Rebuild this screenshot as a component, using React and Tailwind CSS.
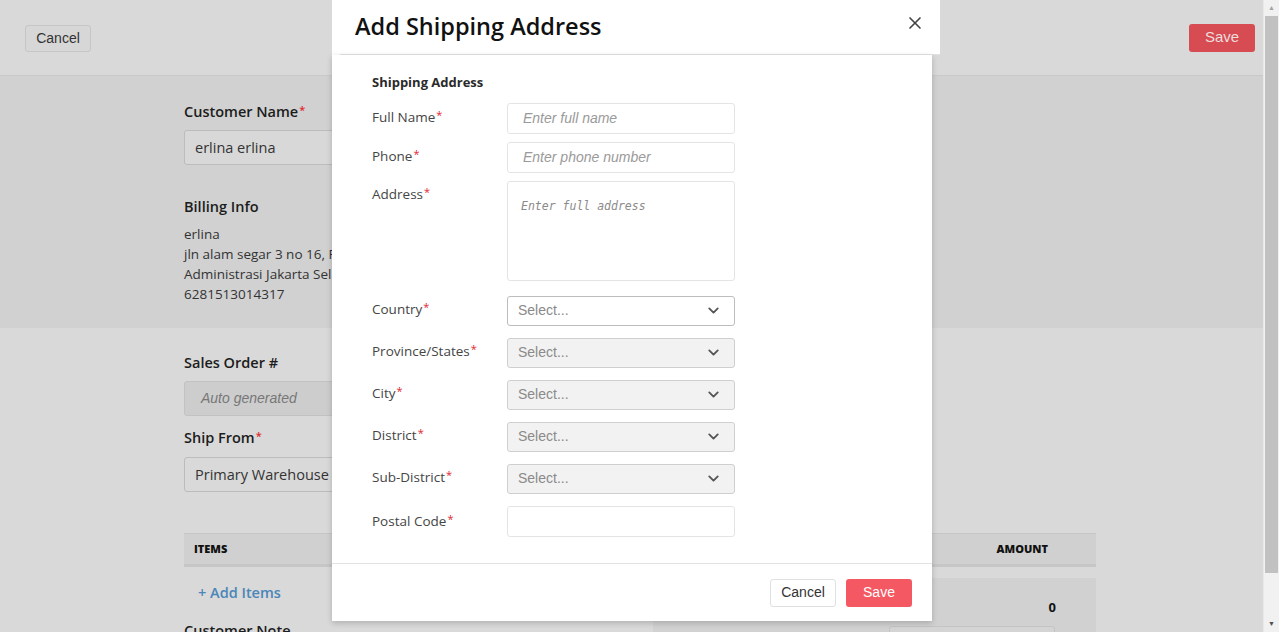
import { ChevronDown, X } from 'lucide-react';

const sans = "font-['Open_Sans','Lato',sans-serif]";

function Req() {
    return <span className="text-[#e0282e] text-[11px] relative top-[-3px] ml-[1px]">*</span>;
}

function TextRow({ label, placeholder, mt }) {
    return (
        <div className={`flex items-start ${mt}`}>
            <div className="w-[135px] pt-[4px] text-[13.5px] text-[#454545]">
                {label}<Req />
            </div>
            <div className="w-[228px] h-[31px] border border-[#e4e4e4] rounded-[3px] px-[15px] flex items-center">
                <span className="italic text-[14px] text-[#9a9a9a] font-['Liberation_Sans',Arial,sans-serif]">{placeholder}</span>
            </div>
        </div>
    );
}

function SelectRow({ label, disabled, mt }) {
    return (
        <div className={`flex items-center ${mt}`}>
            <div className="w-[135px] text-[13.5px] text-[#454545] mt-[-2px]">
                {label}<Req />
            </div>
            <div className={`w-[228px] h-[30px] border rounded-[3px] pl-[10px] pr-[12px] flex items-center justify-between ${disabled ? 'bg-[#f2f2f2] border-[#cfcfcf]' : 'bg-white border-[#bdbdbd]'}`}>
                <span className="text-[14px] text-[#8a8a8a] font-['Liberation_Sans',Arial,sans-serif]">Select...</span>
                <ChevronDown size={17} strokeWidth={2.6} className="text-[#555]" />
            </div>
        </div>
    );
}

function Modal() {
    return (
        <div className={`absolute left-[332px] top-0 ${sans}`}>
            <div className="w-[608px] h-[55px] bg-white">
                <div className="ml-[8px] h-[55px] border-b border-[#e2e2e2] flex items-start justify-between pl-[15px] pr-[15px]">
                    <h1 className="text-[23.5px] font-semibold text-[#111] leading-[32px] pt-[10px]">Add Shipping Address</h1>
                    <X size={20} strokeWidth={2} className="text-[#444] mt-[13px]" />
                </div>
            </div>
            <div className="w-[600px] bg-white shadow-[0_2px_6px_rgba(0,0,0,0.2)]">
                <div className="pl-[40px] pt-[18px] pb-[26px]">
                    <div className="text-[13px] font-bold text-[#2a2a2a] mb-[10px]">Shipping Address</div>
                    <TextRow label="Full Name" placeholder="Enter full name" mt="" />
                    <TextRow label="Phone" placeholder="Enter phone number" mt="mt-[8px]" />
                    <div className="flex items-start mt-[8px]">
                        <div className="w-[135px] pt-[3px] text-[13.5px] text-[#454545]">
                            Address<Req />
                        </div>
                        <div className="w-[228px] h-[100px] border border-[#e4e4e4] rounded-[3px] px-[13px] pt-[10px]">
                            <span className="italic text-[11.5px] text-[#8a8a8a] font-['DejaVu_Sans_Mono',monospace]">Enter full address</span>
                        </div>
                    </div>
                    <SelectRow label="Country" mt="mt-[15px]" />
                    <SelectRow label="Province/States" disabled mt="mt-[12px]" />
                    <SelectRow label="City" disabled mt="mt-[12px]" />
                    <SelectRow label="District" disabled mt="mt-[12px]" />
                    <SelectRow label="Sub-District" disabled mt="mt-[12px]" />
                    <div className="flex items-center mt-[12px]">
                        <div className="w-[135px] text-[13.5px] text-[#454545]">
                            Postal Code<Req />
                        </div>
                        <div className="w-[228px] h-[31px] border border-[#e4e4e4] rounded-[3px]" />
                    </div>
                </div>
                <div className="border-t border-[#e2e2e2] h-[58px] flex items-start pt-[15px] justify-end gap-[10px] pr-[20px] font-['Liberation_Sans',Arial,sans-serif]">
                    <button className="w-[66px] h-[28px] border border-[#e0e0e0] rounded-[3px] text-[14px] text-[#333] bg-white">Cancel</button>
                    <button className="w-[66px] h-[28px] rounded-[3px] text-[14px] text-white bg-[#f45862]">Save</button>
                </div>
            </div>
        </div>
    );
}

export default function App() {
    return (
        <div className="h-[634px] bg-white overflow-hidden">
            <div className="h-[632px] flex relative">
                <div className={`flex-1 h-[632px] overflow-hidden bg-[#d9d9d9] text-[#222] ${sans}`}>
                    <div className="h-[76px] border-b border-[#c9c9c9] flex items-center justify-between pl-[25px] pr-[8px] font-['Liberation_Sans',Arial,sans-serif]">
                        <button className="w-[66px] h-[27px] border border-[#c6c6c6] rounded-[3px] text-[14px] text-[#333] bg-[#d7d7d7] mt-[1px]">Cancel</button>
                        <button className="w-[66px] h-[28px] rounded-[3px] text-[15px] text-[#ecdede] bg-[#d74b52]">Save</button>
                    </div>
                    <div className="bg-[#d1d1d1] h-[252px] pl-[184px] pt-[26px]">
                        <div className="text-[14.5px] leading-[20px] font-semibold text-[#1c1c1c]">Customer Name<Req /></div>
                        <div className="mt-[7px] w-[420px] h-[35px] border border-[#bcbcbc] rounded-[3px] bg-[#d8d8d8] flex items-center px-[10px] text-[14.5px] text-[#333]">erlina erlina</div>
                        <div className="mt-[32px] text-[14.5px] leading-[20px] font-semibold text-[#1c1c1c]">Billing Info</div>
                        <div className="mt-[7px] text-[13.5px] leading-[20px] text-[#333]">
                            <div>erlina</div>
                            <div>jln alam segar 3 no 16, Pondok Pinang</div>
                            <div>Administrasi Jakarta Selatan</div>
                            <div>6281513014317</div>
                        </div>
                    </div>
                    <div className="pl-[184px] pt-[25px]">
                        <div className="text-[14.5px] leading-[20px] font-semibold text-[#1c1c1c]">Sales Order #</div>
                        <div className="mt-[8px] w-[420px] h-[35px] border border-[#c2c2c2] rounded-[3px] bg-[#cdcdcd] flex items-center px-[16px] italic text-[14px] text-[#777] font-['Liberation_Sans',Arial,sans-serif]">Auto generated</div>
                        <div className="mt-[12px] text-[14.5px] leading-[20px] font-semibold text-[#1c1c1c]">Ship From<Req /></div>
                        <div className="mt-[8px] w-[420px] h-[35px] border border-[#bcbcbc] rounded-[3px] flex items-center px-[10px] text-[14.5px] text-[#333]">Primary Warehouse</div>
                        <div className="mt-[41px] w-[912px] h-[34px] bg-[#d0d0d0] border-t border-b-[3px] border-[#c6c6c6] flex items-center justify-between px-[10px] text-[11px] font-extrabold text-[#111]">
                            <span>ITEMS</span>
                            <span className="mr-[38px]">AMOUNT</span>
                        </div>
                        <div className="w-[912px] flex mt-[11px]">
                            <div className="flex-1 pl-[14px] pt-[5px] text-[14.5px] leading-[20px] font-semibold text-[#4a86b8]">+ Add Items</div>
                            <div className="w-[443px] h-[60px] bg-[#d1d1d1] flex flex-col items-end pr-[40px] pt-[20px]">
                                <span className="text-[13px] leading-[18px] font-bold text-[#111]">0</span>
                                <div className="mt-[10px] mr-[1px] w-[166px] h-[10px] border border-[#c4c4c4] rounded-t-[3px] bg-[#d4d4d4]" />
                            </div>
                        </div>
                        <div className="mt-[-17px] text-[14.5px] leading-[20px] font-semibold text-[#1c1c1c]">Customer Note</div>
                    </div>
                </div>
                <div className="w-[16px] h-[632px] bg-[#f1f1f1] flex flex-col items-center border-l border-[#e8e8e8]">
                    <div className="h-[16px] flex items-center justify-center text-[7px] text-[#a3a3a3]">▲</div>
                    <div className="w-[13px] h-[557px] bg-[#c1c1c1]" />
                    <div className="flex-1" />
                    <div className="h-[16px] flex items-center justify-center text-[7px] text-[#505050]">▼</div>
                </div>
                <Modal />
            </div>
        </div>
    );
}
